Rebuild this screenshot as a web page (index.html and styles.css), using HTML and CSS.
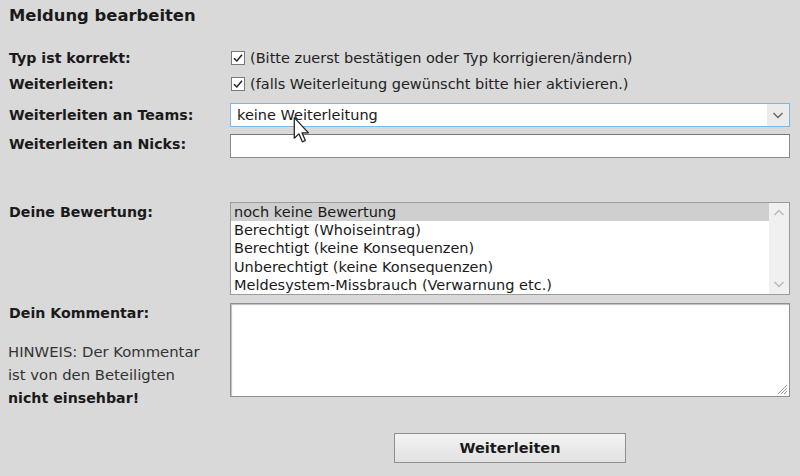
FILE: index.html
```html
<!DOCTYPE html>
<html lang="de">
<head>
<meta charset="utf-8">
<title>Meldung bearbeiten</title>
<link rel="stylesheet" href="styles.css">
</head>
<body>
<div class="page">
  <h1 class="title">Meldung bearbeiten</h1>
  <div class="form">
    <div class="row row-check">
      <div class="label">Typ ist korrekt:</div>
      <div class="field check-field">
        <span class="checkbox"><svg viewBox="0 0 14 14" width="14" height="14"><path d="M3 7.2 L5.8 10 L11 3.8" fill="none" stroke="#222" stroke-width="1.5"/></svg></span>
        <span class="hint">(Bitte zuerst bestätigen oder Typ korrigieren/ändern)</span>
      </div>
    </div>
    <div class="row row-check">
      <div class="label">Weiterleiten:</div>
      <div class="field check-field">
        <span class="checkbox"><svg viewBox="0 0 14 14" width="14" height="14"><path d="M3 7.2 L5.8 10 L11 3.8" fill="none" stroke="#222" stroke-width="1.5"/></svg></span>
        <span class="hint">(falls Weiterleitung gewünscht bitte hier aktivieren.)</span>
      </div>
    </div>
    <div class="row row-select">
      <div class="label">Weiterleiten an Teams:</div>
      <div class="field">
        <div class="select">
          <span class="select-value">keine Weiterleitung</span>
          <span class="select-btn"><svg viewBox="0 0 22 22" width="22" height="22"><path d="M6.5 9 L11 13.5 L15.5 9" fill="none" stroke="#666" stroke-width="1.4"/></svg></span>
          <svg class="cursor" viewBox="0 0 14 22" width="18" height="29"><path d="M1 1 L1 17 L4.6 13.6 L7.3 19.8 L9.6 18.8 L7 12.8 L12 12.8 Z" fill="#fff" stroke="#222" stroke-width="1" stroke-linejoin="round"/></svg>
        </div>
      </div>
    </div>
    <div class="row row-input">
      <div class="label">Weiterleiten an Nicks:</div>
      <div class="field"><div class="input"></div></div>
    </div>
    <div class="row row-list">
      <div class="label label-top">Deine Bewertung:</div>
      <div class="field">
        <div class="listbox">
          <div class="options">
            <div class="option selected">noch keine Bewertung</div>
            <div class="option">Berechtigt (Whoiseintrag)</div>
            <div class="option">Berechtigt (keine Konsequenzen)</div>
            <div class="option">Unberechtigt (keine Konsequenzen)</div>
            <div class="option">Meldesystem-Missbrauch (Verwarnung etc.)</div>
          </div>
          <div class="scrollbar">
            <svg viewBox="0 0 20 20" width="20" height="20"><path d="M5.5 12 L10 7.5 L14.5 12" fill="none" stroke="#b8b8b8" stroke-width="1.4"/></svg>
            <svg viewBox="0 0 20 20" width="20" height="20"><path d="M5.5 8 L10 12.5 L14.5 8" fill="none" stroke="#b8b8b8" stroke-width="1.4"/></svg>
          </div>
        </div>
      </div>
    </div>
    <div class="row row-comment">
      <div class="label-block">
        <div class="label label-top">Dein Kommentar:</div>
        <p class="note">HINWEIS: Der Kommentar<br>ist von den Beteiligten<br><strong>nicht einsehbar!</strong></p>
      </div>
      <div class="field">
        <div class="textarea">
          <svg class="grip" viewBox="0 0 10 10" width="10" height="10"><path d="M9 3 L3 9 M9 6 L6 9 M9 0 L0 9" stroke="#9a9a9a" stroke-width="1"/></svg>
        </div>
      </div>
    </div>
    <div class="row row-button">
      <div class="label"></div>
      <div class="field field-center">
        <button class="button" type="button">Weiterleiten</button>
      </div>
    </div>
  </div>
</div>
</body>
</html>
```
FILE: styles.css
```css
html, body {
  margin: 0;
  padding: 0;
}
body {
  background: #d9d9d9;
  color: #1a1a1a;
  font-family: "DejaVu Sans", Verdana, sans-serif;
  font-size: 14.5px;
  width: 800px;
  height: 476px;
  overflow: hidden;
}
.page {
  padding: 6px 0 0 9px;
}
.title {
  margin: 0;
  font-size: 16.4px;
  line-height: 20px;
  font-weight: bold;
}
.form {
  margin-top: 19px;
}
.row {
  display: flex;
}
.label, .label-block {
  width: 221px;
  flex: none;
  font-weight: bold;
  font-size: 14.2px;
}
.label-block .label {
  width: auto;
}
.field {
  width: 560px;
  flex: none;
}
.row-check {
  height: 26px;
  align-items: center;
}
.check-field {
  display: flex;
  align-items: center;
  gap: 5px;
  padding-left: 1px;
}
.checkbox {
  width: 14px;
  height: 14px;
  box-sizing: border-box;
  border: 1px solid #7a7a7a;
  background: #fff;
  display: flex;
  flex: none;
}
.checkbox svg {
  margin: -1px;
}
.hint {
  color: #222;
  white-space: nowrap;
}
.row-select {
  margin-top: 6px;
  align-items: center;
}
.select {
  position: relative;
  height: 24px;
  box-sizing: border-box;
  border: 1px solid #7eb6e6;
  background: #fff;
  display: flex;
  align-items: center;
}
.select-value {
  flex: 1;
  padding-left: 6px;
}
.select-btn {
  width: 22px;
  height: 22px;
  background: #ebebeb;
  display: flex;
}
.cursor {
  position: absolute;
  left: 62px;
  top: 12px;
}
.row-input {
  margin-top: 7px;
  align-items: center;
}
.row-input .label {
  margin-top: -5px;
}
.input {
  height: 24px;
  box-sizing: border-box;
  border: 1px solid #8a8a8a;
  border-top-color: #777;
  background: #fff;
}
.row-list {
  margin-top: 44px;
}
.label-top {
  line-height: 20px;
}
.listbox {
  height: 93px;
  box-sizing: border-box;
  border: 1px solid #9c9c9c;
  background: #fff;
  display: flex;
}
.options {
  flex: 1;
}
.option {
  height: 18.2px;
  line-height: 18.2px;
  padding-left: 3px;
  white-space: nowrap;
}
.option.selected {
  background: #cfcfcf;
}
.scrollbar {
  width: 20px;
  background: #f0f0f0;
  display: flex;
  flex-direction: column;
  justify-content: space-between;
}
.row-comment {
  margin-top: 8px;
}
.note {
  margin: 17px 0 0 -1px;
  font-weight: normal;
  font-size: 14.8px;
  line-height: 23px;
  color: #333;
  white-space: nowrap;
}
.note strong {
  color: #1a1a1a;
  font-size: 14.2px;
}
.textarea {
  position: relative;
  height: 94px;
  box-sizing: border-box;
  border: 1px solid #8f8f8f;
  box-shadow: inset 1px 1px 1px #bdbdbd;
  background: #fff;
}
.grip {
  position: absolute;
  right: 1px;
  bottom: 1px;
}
.row-button {
  margin-top: 23px;
}
.field-center {
  display: flex;
  justify-content: center;
}
.button {
  width: 232px;
  height: 30px;
  border: 1px solid #8e8e8e;
  background: linear-gradient(#f3f3f3, #e1e1e1);
  font-family: "DejaVu Sans", Verdana, sans-serif;
  font-weight: bold;
  font-size: 14.5px;
  color: #1a1a1a;
  padding: 0;
}
```
